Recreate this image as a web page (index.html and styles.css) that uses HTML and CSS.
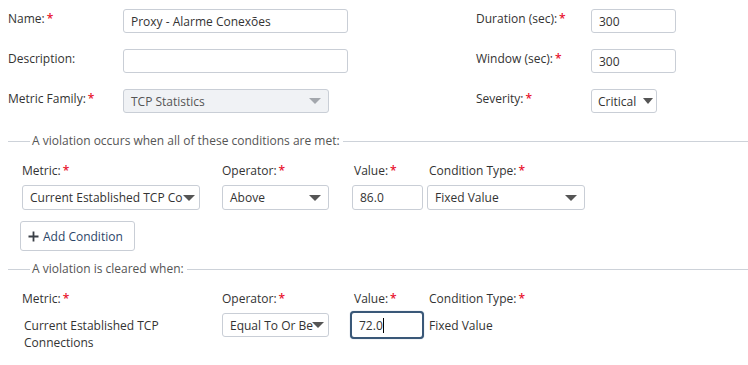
FILE: index.html
```html
<!DOCTYPE html>
<html>
<head>
<meta charset="utf-8">
<link rel="stylesheet" href="styles.css">
</head>
<body>
<div class="top">
  <div class="col left">
    <div class="row"><div class="lbl">Name:<span class="req">*</span></div><div class="field w225">Proxy - Alarme Conexões</div></div>
    <div class="row"><div class="lbl">Description:</div><div class="field w225"></div></div>
    <div class="row"><div class="lbl">Metric Family:<span class="req">*</span></div><div class="field sel disabled w206">TCP Statistics<span class="arrow"></span></div></div>
  </div>
  <div class="col right">
    <div class="row"><div class="lbl">Duration (sec):<span class="req">*</span></div><div class="field w85">300</div></div>
    <div class="row"><div class="lbl">Window (sec):<span class="req">*</span></div><div class="field w85">300</div></div>
    <div class="row"><div class="lbl">Severity:<span class="req">*</span></div><div class="field sel w66">Critical<span class="arrow"></span></div></div>
  </div>
</div>

<fieldset class="group">
  <legend>A violation occurs when all of these conditions are met:</legend>
  <div class="cond">
    <div class="clbl">Metric:<span class="req">*</span></div>
    <div class="clbl">Operator:<span class="req">*</span></div>
    <div class="clbl pad">Value:<span class="req">*</span></div>
    <div class="clbl pad">Condition Type:<span class="req">*</span></div>
    <div class="field sel w178 h25 tight">Current Established TCP Co<span class="arrow"></span></div>
    <div class="field sel w107 h25">Above<span class="arrow"></span></div>
    <div class="field w71 h25">86.0</div>
    <div class="field sel w158 h25">Fixed Value<span class="arrow"></span></div>
  </div>
  <button class="add"><svg class="plus" width="11" height="11" viewBox="0 0 11 11"><path d="M5.5 0.5v10M0.5 5.5h10" stroke="#3a3f46" stroke-width="1.8" fill="none"/></svg>Add Condition</button>
</fieldset>

<fieldset class="group second">
  <legend>A violation is cleared when:</legend>
  <div class="cond">
    <div class="clbl">Metric:<span class="req">*</span></div>
    <div class="clbl">Operator:<span class="req">*</span></div>
    <div class="clbl pad">Value:<span class="req">*</span></div>
    <div class="clbl pad">Condition Type:<span class="req">*</span></div>
    <div class="static">Current Established TCP Connections</div>
    <div class="field sel w107 tight">Equal To Or Be<span class="arrow"></span></div>
    <div class="field focus w71">72.0<span class="caret"></span></div>
    <div class="static fixed">Fixed Value</div>
  </div>
</fieldset>
</body>
</html>
```
FILE: styles.css
```css
html, body {
  margin: 0;
  padding: 0;
  background: #fff;
}
body {
  font-family: "Open Sans", "Noto Sans", sans-serif;
  font-size: 12px;
  color: #333;
  width: 748px;
  height: 365px;
  overflow: hidden;
}
.top {
  display: flex;
  padding: 9px 0 0 8px;
}
.col {
  display: flex;
  flex-direction: column;
  gap: 16px;
}
.left { width: 468px; }
.row {
  display: flex;
  align-items: flex-start;
}
.lbl {
  width: 115px;
  line-height: 18px;
  padding-top: 1px;
}
.req {
  color: #e8112d;
  margin-left: 2px;
  font-weight: 600;
}
.field {
  position: relative;
  box-sizing: border-box;
  height: 24px;
  border: 1px solid #c9ced6;
  border-radius: 3px;
  background: #fff;
  padding: 1px 7px 0;
  line-height: 21px;
  white-space: nowrap;
  overflow: hidden;
}
.h25 { height: 25px; line-height: 22px; }
.w225 { width: 225px; }
.w206 { width: 206px; }
.w85 { width: 85px; }
.w66 { width: 66px; }
.w178 { width: 178px; }
.w107 { width: 107px; }
.w71 { width: 71px; }
.w158 { width: 158px; }
.sel { padding-right: 24px; }
.tight { padding-right: 18px; }
.disabled {
  background: #f0f2f5;
  color: #555;
}
.arrow {
  position: absolute;
  right: 7px;
  top: 50%;
  margin-top: -3px;
  width: 0;
  height: 0;
  border-left: 6px solid transparent;
  border-right: 6px solid transparent;
  border-top: 6px solid #555;
}
.tight .arrow { right: 4px; }
.disabled .arrow { border-top-color: #a3a7ad; }
.w66 { padding-right: 18px; padding-left: 6px; }
.w66 .arrow {
  right: 3px;
  border-left-width: 5.5px;
  border-right-width: 5.5px;
}

.group {
  margin: 20px 0 0 8px;
  padding: 14px 0 0 14px;
  border: 0;
  border-top: 1px solid #cdd2d9;
  min-width: 0;
}
.group legend {
  padding: 0 3px 0 2px;
  margin-left: 8px;
  color: #555;
  line-height: 16px;
}
.second { margin-top: 10px; }
.cond {
  display: grid;
  grid-template-columns: 200px 130px 75px auto;
  row-gap: 6px;
  align-items: start;
}
.clbl { line-height: 16px; }
.clbl.pad { padding-left: 2px; }
.add {
  margin: 11px 0 0 -2px;
  box-sizing: border-box;
  width: 115px;
  height: 30px;
  border: 1px solid #c9ced6;
  border-radius: 3px;
  background: #fff;
  font-family: inherit;
  font-size: 12px;
  color: #2c4669;
  padding: 0 0 0 7px;
  text-align: left;
  display: flex;
  align-items: center;
}
.plus {
  margin-right: 4px;
  flex: none;
}
.static {
  padding: 4px 0 0 2px;
  width: 150px;
  line-height: 17px;
}
.fixed { padding-left: 2px; width: auto; }
.focus {
  height: 28px;
  margin-top: -2px;
  margin-left: -2px;
  width: 74px;
  border: 2px solid #3a5878;
  border-radius: 4px;
  box-shadow: 0 0 1px #7a93b0;
  line-height: 23px;
  padding-left: 7px;
}
.caret {
  display: inline-block;
  width: 1px;
  height: 15px;
  background: #000;
  vertical-align: middle;
  margin-top: -2px;
}
```
